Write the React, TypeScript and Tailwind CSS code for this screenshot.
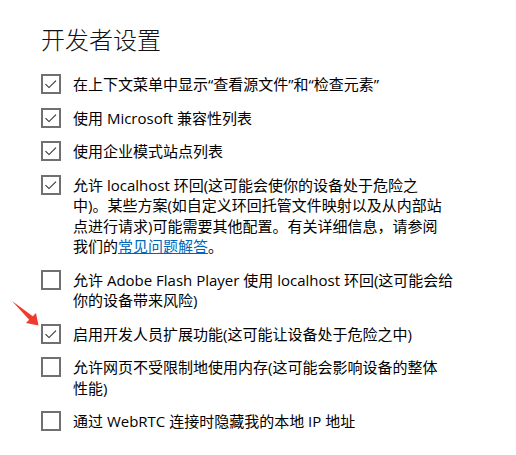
function Box({ checked }: { checked: boolean }) {
  return (
    <div className="w-5 h-5 shrink-0 border-2 border-[#707070] bg-white flex items-center justify-center">
      {checked && (
        <svg width="16" height="16" viewBox="0 0 16 16" fill="none">
          <path d="M2.5 8.2 L6 11.6 L13 4.6" stroke="#333" strokeWidth="1.1" />
        </svg>
      )}
    </div>
  );
}

function Row({ checked, children }: { checked: boolean; children: React.ReactNode }) {
  return (
    <div className="flex gap-3">
      <Box checked={checked} />
      <div className="text-[15px] leading-[20.5px] text-black whitespace-nowrap">{children}</div>
    </div>
  );
}

function App() {
  return (
    <div
      className="relative bg-white w-[516px] h-[455px] pl-[41px] pt-[24px] overflow-hidden"
      style={{ fontFamily: '"Open Sans", "Noto Sans CJK SC", sans-serif' }}
    >
      <h1 className="text-[24px] leading-8 font-light text-[#111]">开发者设置</h1>

      <div className="flex flex-col gap-[13px] mt-[18px]">
        <Row checked>在上下文菜单中显示“查看源文件”和“检查元素”</Row>
        <Row checked>使用 Microsoft 兼容性列表</Row>
        <Row checked>使用企业模式站点列表</Row>
        <Row checked>
          允许 localhost 环回(这可能会使你的设备处于危险之
          <br />
          中)。某些方案(如自定义环回托管文件映射以及从内部站
          <br />
          点进行请求)可能需要其他配置。有关详细信息，请参阅
          <br />
          我们的<span className="text-[#0067b8] underline">常见问题解答</span>。
        </Row>
        <Row checked={false}>
          允许 Adobe Flash Player 使用 localhost 环回(这可能会给
          <br />
          你的设备带来风险)
        </Row>
        <Row checked>启用开发人员扩展功能(这可能让设备处于危险之中)</Row>
        <Row checked={false}>
          允许网页不受限制地使用内存(这可能会影响设备的整体
          <br />
          性能)
        </Row>
        <Row checked={false}>通过 WebRTC 连接时隐藏我的本地 IP 地址</Row>
      </div>

      {/* red pointer arrow */}
      <svg className="absolute left-[10px] top-[298px]" width="32" height="32" viewBox="0 0 32 32">
        <polygon
          points="2,3 22.8,18.2 26,15 28.5,27.5 16,25 19.2,21.8"
          fill="#f03a2e"
        />
      </svg>
    </div>
  );
}

export default App;
